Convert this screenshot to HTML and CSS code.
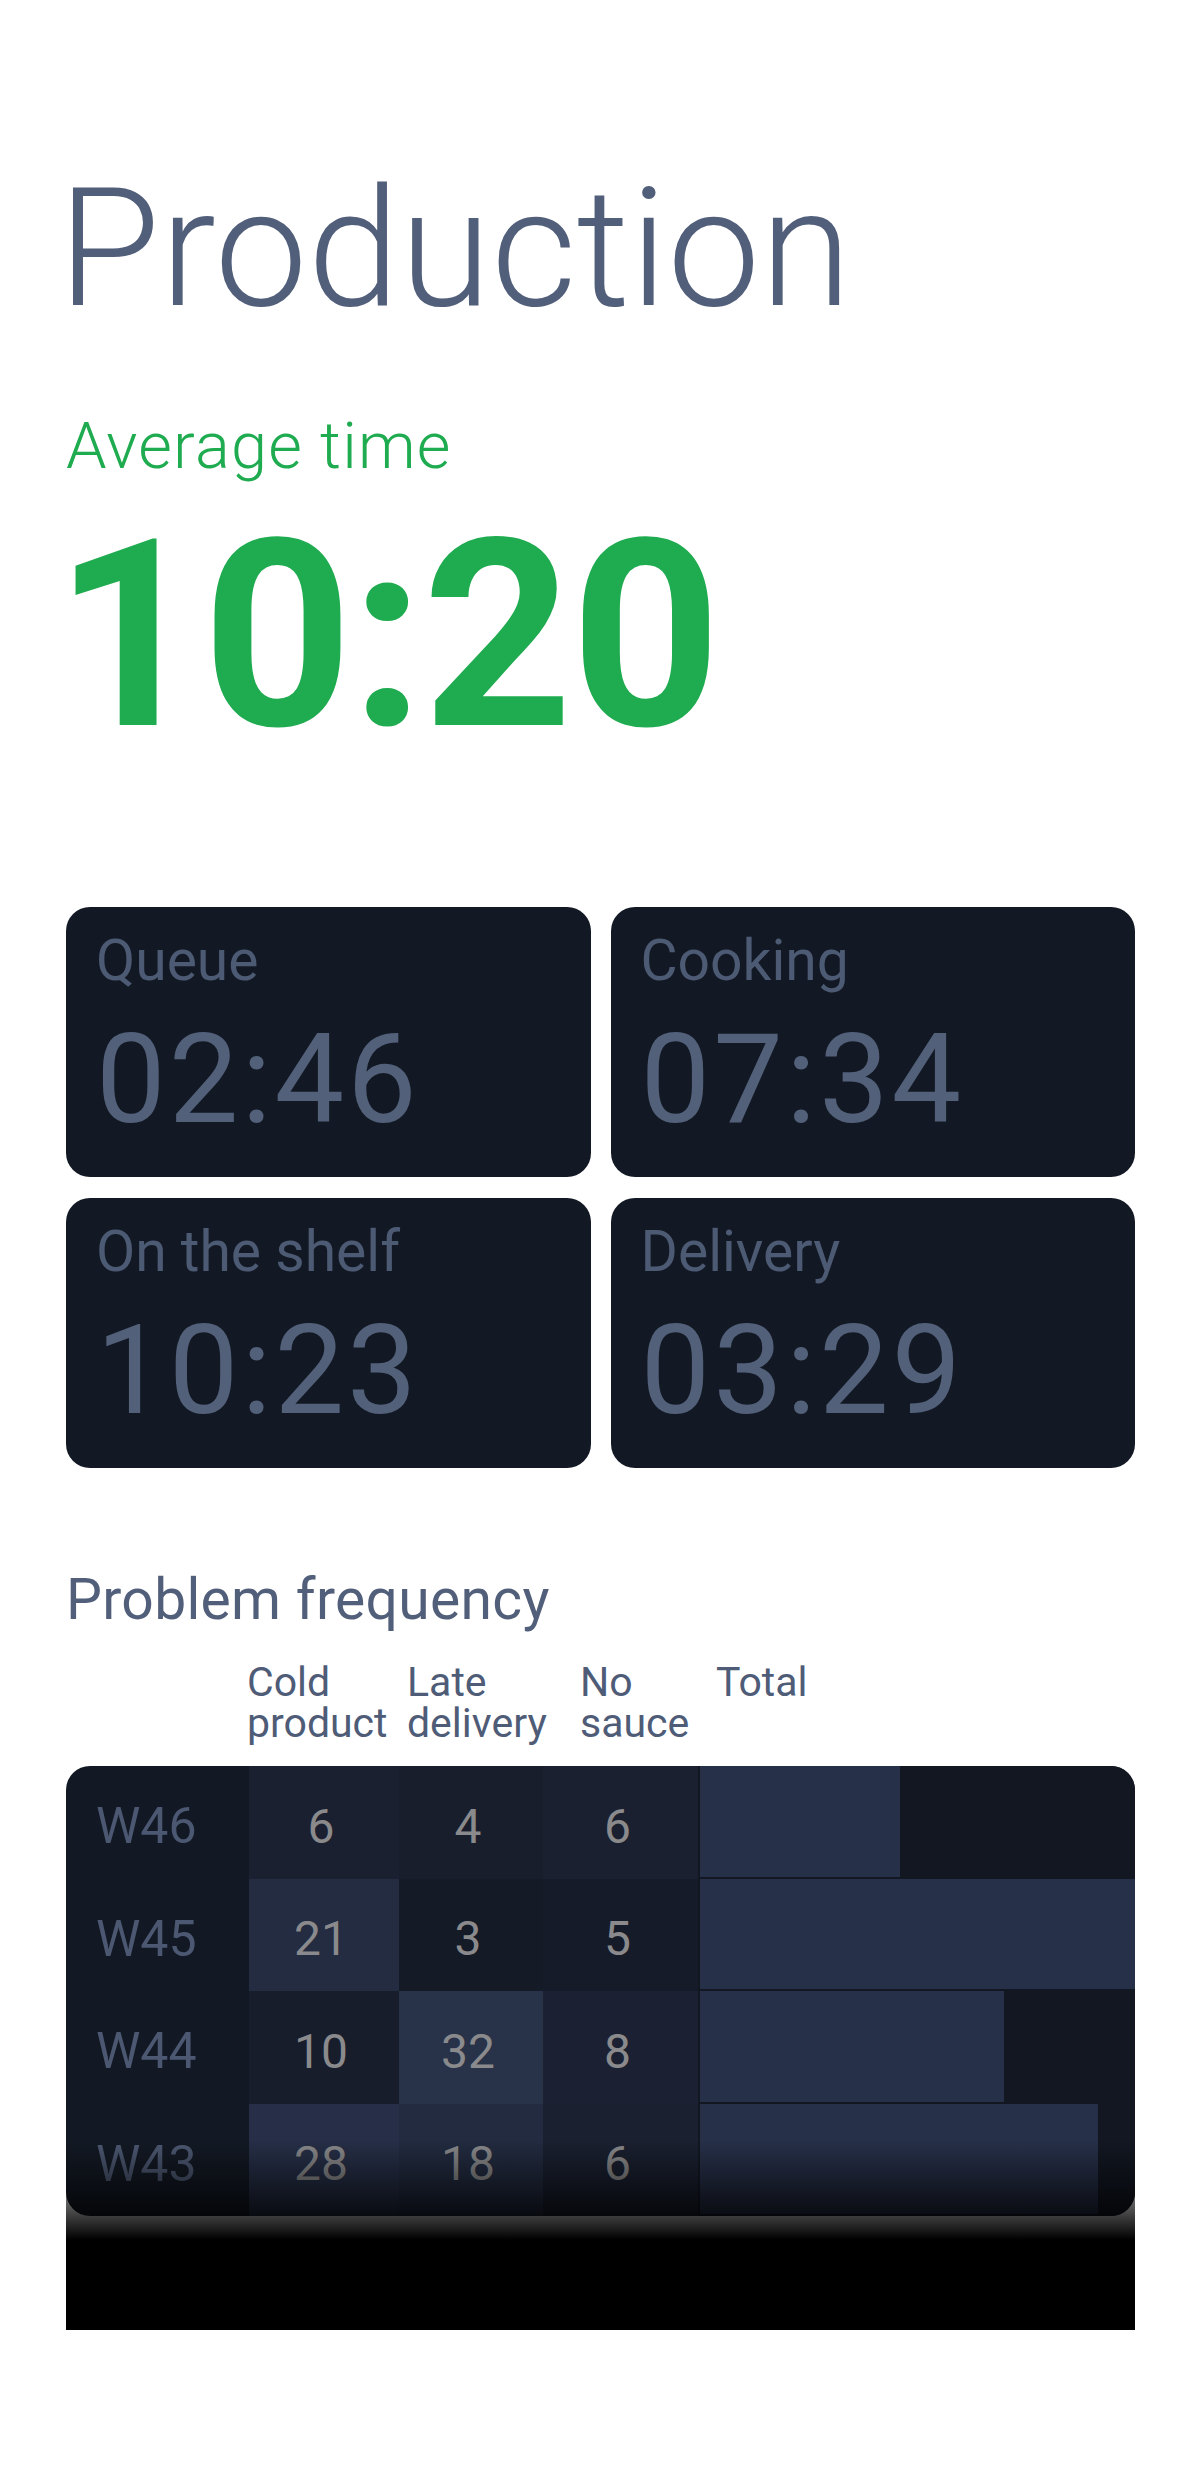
FILE: index.html
```html
<!DOCTYPE html>
<html lang="en">
<head>
<meta charset="utf-8">
<title>Production</title>
<link rel="stylesheet" href="styles.css">
</head>
<body>
<main class="page">
  <h1 class="title">Production</h1>
  <p class="avg-label">Average time</p>
  <p class="avg-value">10:20</p>

  <section class="cards">
    <div class="card"><div class="card-label">Queue</div><div class="card-value">02:46</div></div>
    <div class="card"><div class="card-label">Cooking</div><div class="card-value">07:34</div></div>
    <div class="card"><div class="card-label">On the shelf</div><div class="card-value">10:23</div></div>
    <div class="card"><div class="card-label">Delivery</div><div class="card-value">03:29</div></div>
  </section>

  <h2 class="section-title">Problem frequency</h2>
  <div class="table-head">
    <div></div>
    <div class="head-cell"><div>Cold</div><div>product</div></div>
    <div class="head-cell"><div>Late</div><div>delivery</div></div>
    <div class="head-cell"><div>No</div><div>sauce</div></div>
    <div class="head-cell"><div>Total</div></div>
  </div>
  <div class="table-wrap">
    <div class="table">
      <div class="row">
        <div class="week">W46</div>
        <div class="cell" style="background:#1a2030">6</div>
        <div class="cell" style="background:#181e2c">4</div>
        <div class="cell" style="background:#1a2030">6</div>
        <div class="total"><div class="bar" style="width:46%"></div></div>
      </div>
      <div class="row">
        <div class="week">W45</div>
        <div class="cell" style="background:#232c41">21</div>
        <div class="cell" style="background:#151a27">3</div>
        <div class="cell" style="background:#151b28">5</div>
        <div class="total"><div class="bar" style="width:100%"></div></div>
      </div>
      <div class="row">
        <div class="week">W44</div>
        <div class="cell" style="background:#181d2c">10</div>
        <div class="cell" style="background:#283249">32</div>
        <div class="cell" style="background:#1b2132">8</div>
        <div class="total"><div class="bar" style="width:69.8%"></div></div>
      </div>
      <div class="row">
        <div class="week">W43</div>
        <div class="cell" style="background:#262f47">28</div>
        <div class="cell" style="background:#222b40">18</div>
        <div class="cell" style="background:#1a2030">6</div>
        <div class="total"><div class="bar" style="width:91.5%"></div></div>
      </div>
    </div>
  </div>
</main>
</body>
</html>
```

FILE: styles.css
```css
* { box-sizing: border-box; }

html, body {
  margin: 0;
  padding: 0;
  background: #ffffff;
}

body {
  font-family: Roboto, "Liberation Sans", Arial, sans-serif;
  color: #525f7a;
}

.page {
  width: 1200px;
  padding: 166px 65px 0 66px;
}

.title {
  margin: 0 0 0 -8px;
  font-size: 166px;
  line-height: 166px;
  font-weight: 300;
  letter-spacing: 0;
  color: #525f7a;
}

.avg-label {
  margin: 82px 0 0;
  font-size: 65px;
  line-height: 65px;
  font-weight: 300;
  letter-spacing: 1.2px;
  color: #1fab4f;
}

.avg-value {
  margin: 26px 0 0 -12px;
  font-size: 262px;
  line-height: 262px;
  font-weight: 700;
  letter-spacing: -2px;
  color: #1fab4f;
}

.cards {
  margin-top: 140px;
  display: grid;
  grid-template-columns: 1fr 1fr;
  column-gap: 20px;
  row-gap: 21px;
}

.card {
  height: 270px;
  background: #131924;
  border-radius: 24px;
  padding: 26px 30px 0;
}

.card-label {
  font-size: 57px;
  line-height: 56px;
  font-weight: 400;
  color: #4d5a74;
}

.card-value {
  margin-top: 29px;
  font-size: 124px;
  line-height: 124px;
  font-weight: 400;
  letter-spacing: 3px;
  color: #52607a;
}

.section-title {
  margin: 104px 0 0;
  font-size: 57px;
  line-height: 56px;
  font-weight: 400;
  letter-spacing: 0.3px;
  color: #525f7a;
}

.table-head {
  margin-top: 34px;
  display: grid;
  grid-template-columns: 181px 160px 173px 136px 1fr;
  font-size: 41px;
  line-height: 41px;
  color: #4f5c77;
}

.table-wrap {
  position: relative;
  margin-top: 22px;
  padding-bottom: 114px;
}

.table-wrap::after {
  content: "";
  position: absolute;
  left: 0;
  right: 0;
  bottom: 0;
  height: 190px;
  background: linear-gradient(to bottom, rgba(0,0,0,0) 0, #000 100px, #000 100%);
  pointer-events: none;
}

.table {
  background: #131924;
  border-radius: 24px;
  overflow: hidden;
}

.row {
  display: grid;
  grid-template-columns: 183px 150px 144px 155px 1fr;
  height: 112.5px;
}

.week {
  display: flex;
  align-items: center;
  padding: 8px 0 0 30px;
  font-size: 50px;
  color: #4c5872;
}

.cell {
  display: flex;
  align-items: center;
  justify-content: center;
  padding: 8px 6px 0 0;
  font-size: 48px;
  color: #8a8a8c;
}

.total {
  padding: 0 0 2px 2px;
  background: #121722;
}

.bar {
  height: 100%;
  background: #273049;
}
```
